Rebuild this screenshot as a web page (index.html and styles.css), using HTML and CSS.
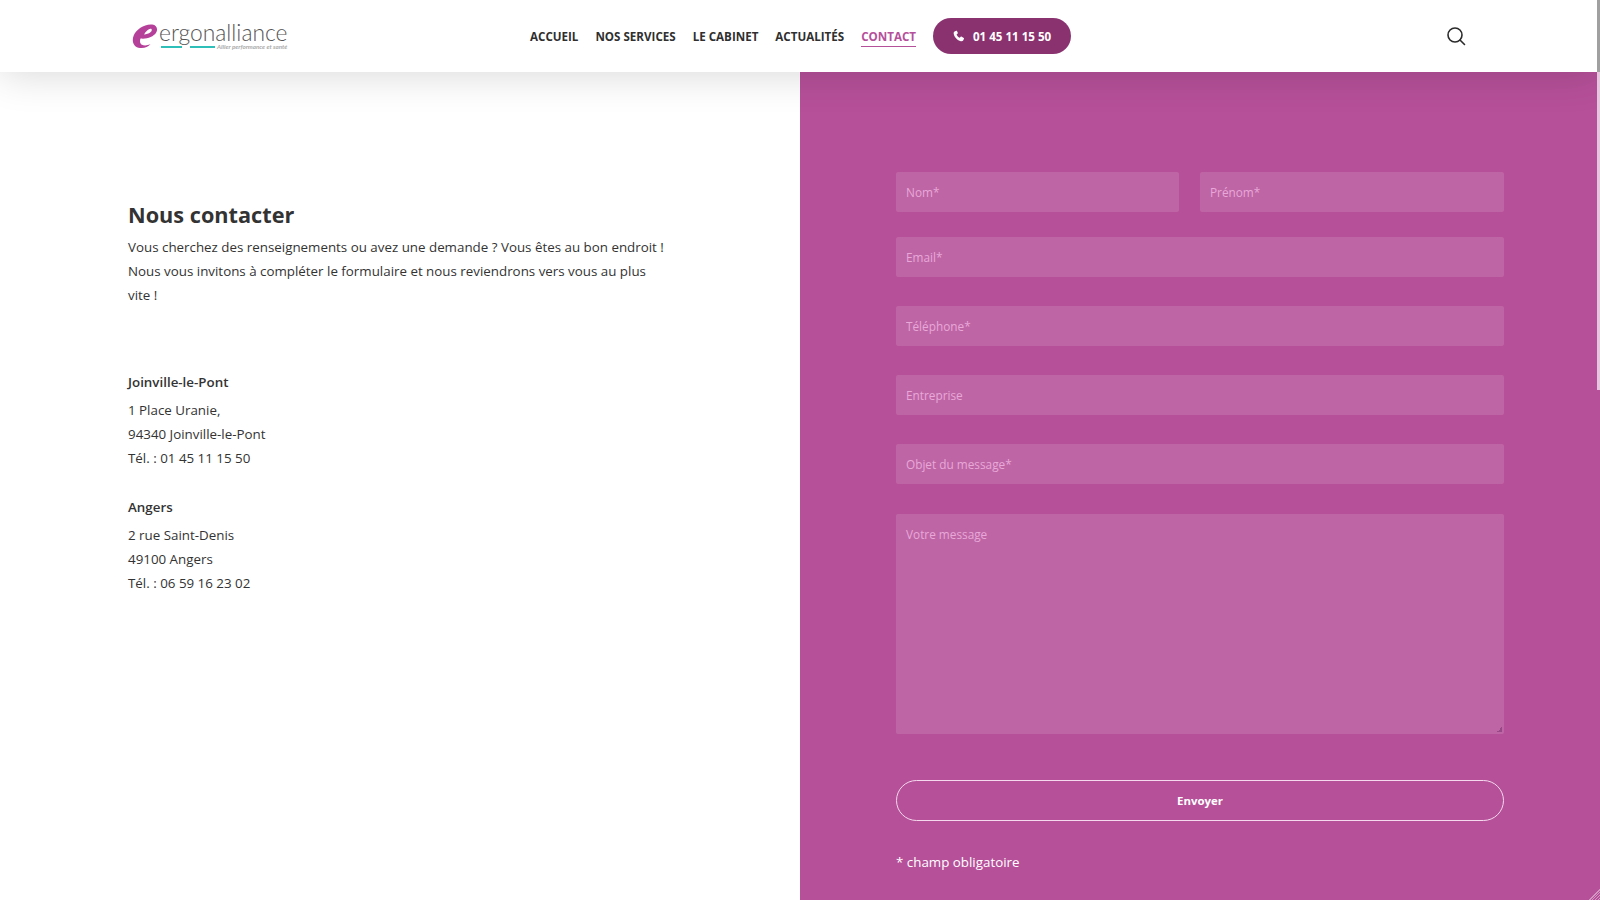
FILE: index.html
```html
<!DOCTYPE html>
<html lang="fr">
<head>
<meta charset="utf-8">
<title>Contact - Ergonalliance</title>
<link rel="stylesheet" href="styles.css">
</head>
<body>
<div class="page">
  <header class="header">
    <a class="logo" href="#">
      <svg class="logo-mark" width="27" height="26" viewBox="0 0 27 26">
        <path fill="#b5409a" d="M8.500 15.500c6 .8 13-1.500 15.700-6 2-3.500.5-7.500-4-8C12.500.7 4.500 6 1.700 12.500c-2.500 6 .2 11.800 6.300 12.500 4.500.5 8-1 10.500-3.700-3 1.200-6.500 1.500-8.500.5-2-1-2.500-3.800-1.500-6.300zM12 11.500c1.800-3.200 4.500-5.700 6.500-5.700 1.800 0 1.700 2-.1 3.400-1.700 1.400-4 2.100-6.400 2.300z"/>
      </svg>
      <span class="logo-text">
        <span class="logo-name">ergonalliance</span>
        <span class="logo-tag"><span class="logo-rule"></span><span class="logo-tagline">Allier performance et santé</span></span>
      </span>
    </a>
    <nav class="nav">
      <a href="#">ACCUEIL</a>
      <a href="#">NOS SERVICES</a>
      <a href="#">LE CABINET</a>
      <a href="#">ACTUALITÉS</a>
      <a href="#" class="active">CONTACT</a>
      <a href="#" class="phone">
        <svg width="12" height="12" viewBox="0 0 24 24"><path fill="#fff" d="M6.600 1.500 3 3.200C1.500 4 1 5.800 1.500 8c1.400 6.500 7.500 13 14 14.500 2.200.5 4-.1 4.800-1.500l1.700-3.500c.2-.5 0-1-.4-1.300l-4.800-3c-.5-.3-1-.2-1.400.2l-2 2.300c-3-1.300-5-3.700-6.300-6.700l2.300-1.900c.4-.4.500-.9.200-1.400L7.900 1.900c-.3-.5-.8-.6-1.300-.4z"/></svg>
        01 45 11 15 50
      </a>
    </nav>
    <button class="search" aria-label="Rechercher">
      <svg width="20" height="20" viewBox="0 0 20 20" fill="none" stroke="#2b2b2b" stroke-width="1.600"><circle cx="9" cy="9" r="7"/><path d="M14 14l4.500 4.500" stroke-linecap="round"/></svg>
    </button>
  </header>
  <main class="main">
    <section class="intro">
      <h1>Nous contacter</h1>
      <p class="lead">Vous cherchez des renseignements ou avez une demande ? Vous êtes au bon endroit ! Nous vous invitons à compléter le formulaire et nous reviendrons vers vous au plus vite !</p>
      <h2 class="city first">Joinville-le-Pont</h2>
      <p class="addr">1 Place Uranie,<br>94340 Joinville-le-Pont<br>Tél. : 01 45 11 15 50</p>
      <h2 class="city">Angers</h2>
      <p class="addr">2 rue Saint-Denis<br>49100 Angers<br>Tél. : 06 59 16 23 02</p>
    </section>
    <section class="panel">
      <form class="form">
        <div class="row">
          <input class="field nom" placeholder="Nom*">
          <input class="field prenom" placeholder="Prénom*">
        </div>
        <input class="field gap-a" placeholder="Email*">
        <input class="field gap-b" placeholder="Téléphone*">
        <input class="field gap-b" placeholder="Entreprise">
        <input class="field gap-b" placeholder="Objet du message*">
        <textarea class="field area" placeholder="Votre message"></textarea>
        <button type="button" class="send">Envoyer</button>
        <p class="note">* champ obligatoire</p>
      </form>
    </section>
  </main>
</div>
</body>
</html>
```
FILE: styles.css
```css
* { box-sizing: border-box; }
html, body { margin: 0; height: 100%; overflow: hidden; }
body { font-family: "Open Sans", "Liberation Sans", sans-serif; color: #333; background: #fff; }
a { text-decoration: none; color: inherit; }
.page { height: 900px; width: 1600px; display: flex; flex-direction: column; position: relative; }
.page::after { content: ""; position: absolute; right: 0; top: 0; width: 3px; height: 390px; background: linear-gradient(#a0a0a0 72px, #e6c6df 72px); z-index: 3; }
.header { height: 72px; display: flex; align-items: center; background: #fff; position: relative; z-index: 2; box-shadow: 0 2px 40px rgba(0,0,0,.16); flex: none; }
.logo { margin-left: 132px; width: 160px; display: flex; align-items: flex-start; height: 26px; }
.logo-mark { flex: none; }
.logo-text { display: flex; flex-direction: column; }
.logo-name { font-family: Lato, sans-serif; font-weight: 300; font-size: 22.800px; line-height: 24px; color: #555; white-space: nowrap; margin-top: -3px; }
.logo-tag { display: flex; align-items: center; margin-top: -1px; }
.logo-rule { width: 54px; height: 2px; margin-left: 2px; background: linear-gradient(90deg, #2fbfb9 21px, transparent 21px, transparent 29px, #2fbfb9 29px); }
.logo-tagline { font-family: Lato, sans-serif; font-style: italic; font-size: 6.200px; font-weight: 700; color: #aaa; margin-left: 2px; white-space: nowrap; }
.nav { margin-left: 238px; display: flex; align-items: center; gap: 17px; font-size: 11.600px; font-weight: 700; color: #2f2f2f; }
.nav a { white-space: nowrap; }
.nav .active { color: #b5509b; border-bottom: 1px solid #b5509b; line-height: 18px; padding-top: 2px; }
.nav .phone { background: #8a3270; color: #fff; height: 36px; width: 138px; border-radius: 18px; display: flex; align-items: center; justify-content: center; gap: 8px; }
.search { margin-left: 375px; width: 20px; height: 20px; padding: 0; border: 0; background: none; }
.main { flex: 1; display: flex; min-height: 0; }
.intro { width: 800px; padding: 128px 0 0 128px; flex: none; }
.intro h1 { margin: 0; font-size: 21.700px; line-height: 30px; font-weight: 700; }
.lead { margin: 5px 0 0; width: 540px; font-size: 13.350px; line-height: 24px; }
.city { margin: 25px 0 0; font-size: 13.350px; line-height: 24px; font-weight: 600; }
.city.first { margin-top: 63px; }
.addr { margin: 4px 0 0; font-size: 13.350px; line-height: 24px; }
.panel { flex: 1; position: relative; background-color: #b65099; padding: 100px 93px 0 96px; }
.panel::after { content: ""; position: absolute; right: 0; bottom: 0; width: 12px; height: 12px; background: repeating-linear-gradient(135deg, transparent 0 1px, rgba(255,255,255,.4) 1px 2px); clip-path: polygon(100% 0, 100% 100%, 0 100%); }
.form { width: 608px; display: flex; flex-direction: column; }
.row { display: flex; gap: 21px; }
.field { display: block; width: 100%; height: 40px; border: 0; border-radius: 2px; background-color: rgba(255,255,255,.12); padding: 0 10px; font-family: "Open Sans", sans-serif; font-size: 11.800px; color: #fff; outline: none; }
.field::placeholder { color: #e8a8d8; opacity: 1; }
.nom { width: 283px; flex: none; }
.prenom { width: 304px; flex: none; }
.gap-a { margin-top: 25px; }
.gap-b { margin-top: 29px; }
.area { margin-top: 30px; height: 220px; padding-top: 12px; resize: none; background-image: linear-gradient(135deg, transparent 50%, rgba(120,50,110,.55) 50%); background-repeat: no-repeat; background-position: right 2px bottom 2px; background-size: 5px 5px; }
.send { margin-top: 46px; height: 41px; border: 1.500px solid #f5d8ee; border-radius: 21px; background: none; color: #fff; font-family: "Open Sans", sans-serif; font-size: 11.400px; font-weight: 700; }
.note { margin: 29px 0 0; color: #fff; font-size: 13.350px; line-height: 24px; }
```
